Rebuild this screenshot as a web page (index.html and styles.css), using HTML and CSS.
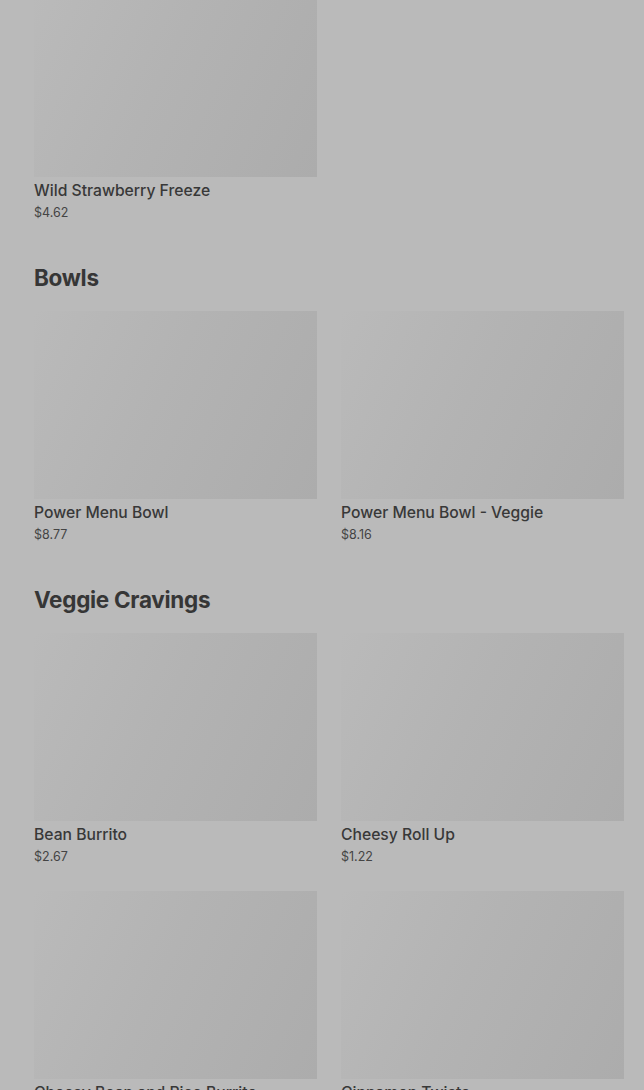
FILE: index.html
```html
<!DOCTYPE html>
<html lang="en">
<head>
<meta charset="utf-8">
<title>Menu</title>
<link rel="stylesheet" href="styles.css">
</head>
<body>
<main class="menu">
  <section class="section section-first">
    <div class="grid">
      <div class="card">
        <div class="thumb"></div>
        <div class="name">Wild Strawberry Freeze</div>
        <div class="price">$4.62</div>
      </div>
    </div>
  </section>
  <section class="section">
    <h2 class="heading">Bowls</h2>
    <div class="grid">
      <div class="card">
        <div class="thumb"></div>
        <div class="name">Power Menu Bowl</div>
        <div class="price">$8.77</div>
      </div>
      <div class="card">
        <div class="thumb"></div>
        <div class="name">Power Menu Bowl - Veggie</div>
        <div class="price">$8.16</div>
      </div>
    </div>
  </section>
  <section class="section">
    <h2 class="heading">Veggie Cravings</h2>
    <div class="grid">
      <div class="card">
        <div class="thumb"></div>
        <div class="name">Bean Burrito</div>
        <div class="price">$2.67</div>
      </div>
      <div class="card">
        <div class="thumb"></div>
        <div class="name">Cheesy Roll Up</div>
        <div class="price">$1.22</div>
      </div>
      <div class="card">
        <div class="thumb"></div>
        <div class="name">Cheesy Bean and Rice Burrito</div>
        <div class="price">$1.99</div>
      </div>
      <div class="card">
        <div class="thumb"></div>
        <div class="name">Cinnamon Twists</div>
        <div class="price">$1.49</div>
      </div>
    </div>
  </section>
</main>
</body>
</html>
```

FILE: styles.css
```css
html, body {
  margin: 0;
  padding: 0;
  background: #bababa;
  overflow: hidden;
}
body {
  font-family: Inter, "Noto Sans", "Liberation Sans", sans-serif;
  color: #333;
}
.menu {
  padding: 0 20px 0 34px;
  margin-top: -11px;
}
.section {
  margin-top: 42px;
}
.section-first {
  margin-top: 0;
}
.heading {
  margin: 0 0 19px;
  font-size: 22.5px;
  line-height: 28px;
  font-weight: 700;
  letter-spacing: -0.3px;
  color: #363636;
}
.grid {
  display: grid;
  grid-template-columns: 1fr 1fr;
  column-gap: 24px;
  row-gap: 25px;
}
.thumb {
  height: 188px;
  background: linear-gradient(115deg, #bababa 0%, #b3b3b3 45%, #acacac 100%);
}
.name {
  margin-top: 3px;
  font-size: 15.7px;
  line-height: 22px;
  font-weight: 500;
  color: #383838;
}
.price {
  margin-top: 2px;
  font-size: 12.5px;
  line-height: 18px;
  font-weight: 400;
  color: #444;
}
```
